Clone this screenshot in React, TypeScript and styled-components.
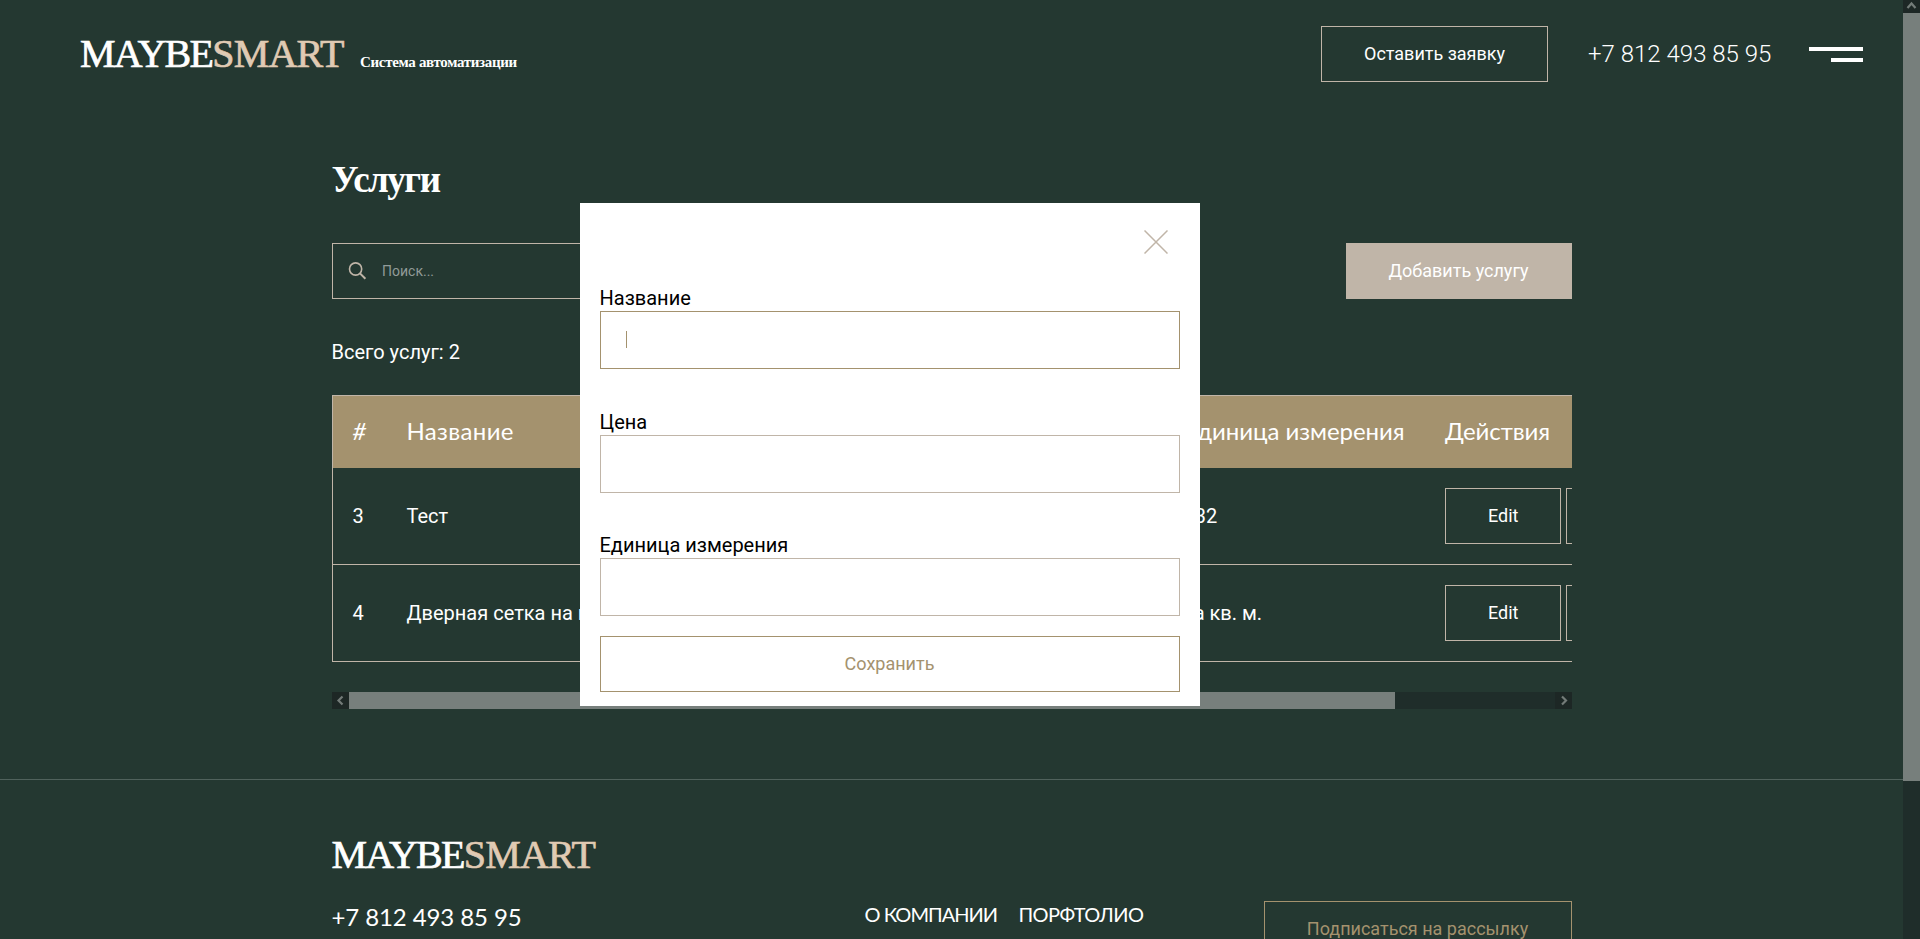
import React from "react";
import styled, { createGlobalStyle } from "styled-components";

const color = {
  bg: "#243831",
  gold: "#a4926e",
  beige: "#c0b5a8",
  sand: "#e0cab3",
  track: "#1f2d2a",
  arrowBox: "#1d2725",
  thumb: "#777f7c",
};

const GlobalStyle = createGlobalStyle`
  * { box-sizing: border-box; }
  body { margin: 0; background: ${color.bg}; color: #fff; font: 400 20px/24px Roboto, sans-serif; overflow: hidden; }
  button, input { font-family: inherit; border-radius: 0; outline: none; }
`;

const Screen = styled.div`
  position: relative;
  display: flex;
  height: 939px;
  overflow: hidden;
`;

const Page = styled.div`
  flex: 1;
  min-width: 0;
  display: flex;
  flex-direction: column;
`;

const Header = styled.header`
  height: 108px;
  flex: none;
  display: flex;
  align-items: center;
  padding: 0 40px 0 80px;
`;

const Logo = styled.div`
  display: flex;
  width: 264px;
  font: 400 40px/48px "Liberation Serif", serif;
  letter-spacing: -1.7px;
  -webkit-text-stroke: 0.7px currentColor;
`;

const LogoAccent = styled.span`
  color: ${color.sand};
  letter-spacing: -0.8px;
`;

const Tagline = styled.div`
  margin: 15px 0 0 16px;
  font: 700 15px/20px "Liberation Serif", serif;
  letter-spacing: -0.33px;
  white-space: nowrap;
`;

const Button = styled.button<{ $variant?: "outline" | "filled" | "gold"; $width?: number }>`
  height: 56px;
  flex: none;
  width: ${(p) => (p.$width ? `${p.$width}px` : "auto")};
  padding: 0 42px;
  font-size: 18px;
  line-height: 22px;
  white-space: nowrap;
  color: ${(p) => (p.$variant === "gold" ? color.gold : "#fff")};
  background: ${(p) => (p.$variant === "filled" ? color.beige : "transparent")};
  border: 1px solid ${(p) => (p.$variant === "gold" ? color.gold : color.beige)};
`;

const HeaderActions = styled.div`
  margin-left: auto;
  display: flex;
  align-items: center;
`;

const HeaderPhone = styled.a`
  width: 184px;
  margin: 0 37px 0 40px;
  font-size: 24px;
  font-weight: 300;
  line-height: 28px;
  white-space: nowrap;
`;

const Burger = styled.div`
  width: 54px;
  display: flex;
  flex-direction: column;
  align-items: flex-end;
  gap: 7px;
`;

const BurgerBar = styled.span<{ $width: number }>`
  width: ${(p) => p.$width}px;
  height: 4px;
  background: #fff;
`;

const Main = styled.main`
  width: 1240px;
  height: 671px;
  flex: none;
  margin-left: 331.5px;
  padding-top: 48px;
`;

const Title = styled.h1`
  margin: 0 0 39px;
  font: 700 37px/48px "Liberation Serif", serif;
  letter-spacing: -1.5px;
`;

const Toolbar = styled.div`
  display: flex;
  justify-content: space-between;
`;

const SearchBox = styled.label`
  width: 500px;
  height: 56px;
  display: flex;
  align-items: center;
  gap: 15.5px;
  padding-left: 15px;
  border: 1px solid ${color.beige};
`;

const SearchInput = styled.input`
  flex: 1;
  padding: 0;
  border: 0;
  background: transparent;
  font-size: 14px;
  &::placeholder { color: #919b98; opacity: 1; }
`;

const Total = styled.p`
  margin: 41px 0 31px;
`;

const TableScroll = styled.div`
  overflow: hidden;
`;

const Table = styled.div`
  width: 1430px;
  border: 1px solid ${color.beige};
  border-bottom: 0;
`;

const Row = styled.div`
  display: grid;
  grid-template-columns: 54px 654px 123px 261.5px 1fr;
  align-items: center;
  height: 97px;
  border-bottom: 1px solid ${color.beige};
`;

const HeadRow = styled(Row)`
  height: 72px;
  padding-bottom: 3px;
  border-bottom: 0;
  background: ${color.gold};
  font: 400 24px/29px Lato, sans-serif;
`;

const Cell = styled.div<{ $tracking?: number }>`
  display: flex;
  gap: 5px;
  padding: 0 20px;
  white-space: nowrap;
  letter-spacing: ${(p) => p.$tracking ?? 0}px;
`;

const Hash = styled.span`
  font-style: italic;
`;

const HScroll = styled.div`
  display: flex;
  height: 17px;
  margin-top: 30px;
  background: ${color.track};
`;

const ScrollArrow = styled.div<{ $height?: number }>`
  display: flex;
  align-items: center;
  justify-content: center;
  width: 17px;
  height: ${(p) => p.$height ?? 17}px;
  flex: none;
  background: ${color.arrowBox};
  &:last-child { margin-left: auto; }
`;

const HThumb = styled.div`
  width: 1046px;
  background: ${color.thumb};
`;

const VScroll = styled.div`
  width: 17px;
  flex: none;
  background: ${color.track};
`;

const VThumb = styled.div`
  height: 768px;
  background: ${color.thumb};
`;

const Footer = styled.footer`
  flex: 1;
  display: flex;
  align-items: flex-start;
  padding: 51px 331.5px 0;
  border-top: 1px solid #50625c;
`;

const FooterBrand = styled.div`
  width: 533px;
`;

const FooterPhone = styled.a`
  display: block;
  margin-top: 23px;
  font: 400 24px/29px Lato, sans-serif;
  letter-spacing: -0.1px;
`;

const FooterNav = styled.nav`
  display: flex;
  gap: 21.5px;
  padding-top: 71px;
  line-height: 24px;
`;

const NavLink = styled.a<{ $tracking: number }>`
  white-space: nowrap;
  font-family: Lato, sans-serif;
  letter-spacing: ${(p) => p.$tracking}px;
`;

const Subscribe = styled.div`
  margin: 70px 0 0 auto;
`;

const Modal = styled.form`
  position: absolute;
  left: 579.5px;
  top: 203px;
  width: 620px;
  height: 503px;
  display: flex;
  flex-direction: column;
  padding: 27px 20px 0;
  background: #fff;
  color: #000;
`;

const CloseButton = styled.button`
  align-self: flex-end;
  display: flex;
  margin: 0 12px 32px 0;
  padding: 0;
  border: 0;
  background: none;
`;

const Field = styled.label`
  display: flex;
  flex-direction: column;
  gap: 1px;
  margin-bottom: 40.5px;
  &:nth-of-type(3) { margin-bottom: 20px; }
`;

const FieldBox = styled.div<{ $focused?: boolean }>`
  display: flex;
  align-items: center;
  height: 58px;
  padding: 0 25px;
  border: 1px solid ${(p) => (p.$focused ? color.gold : color.beige)};
`;

const Caret = styled.span`
  width: 1px;
  height: 17px;
  margin-bottom: 1px;
  background: ${color.gold};
`;

const Arrow = ({ d }: { d: string }) => (
  <svg width="11" height="11" viewBox="0 0 11 11" fill="none" stroke="#737b78" strokeWidth="2.2">
    <path d={d} />
  </svg>
);

const Brand = () => (
  <Logo>
    MAYBE<LogoAccent>SMART</LogoAccent>
  </Logo>
);

const services = [
  { id: 3, name: "Тест", price: "132", unit: "132" },
  { id: 4, name: "Дверная сетка на петлях", price: "1200", unit: "за кв. м." },
];

const fields = ["Название", "Цена", "Единица измерения"];

export default function App() {
  return (
    <Screen>
      <GlobalStyle />
      <Page>
        <Header>
          <Brand />
          <Tagline>Система автоматизации</Tagline>
          <HeaderActions>
            <Button $width={227}>Оставить заявку</Button>
            <HeaderPhone>+7 812 493 85 95</HeaderPhone>
            <Burger>
              <BurgerBar $width={54} />
              <BurgerBar $width={32} />
            </Burger>
          </HeaderActions>
        </Header>
        <Main>
          <Title>Услуги</Title>
          <Toolbar>
            <SearchBox>
              <svg width="19" height="18" viewBox="0 0 19 18" fill="none" stroke={color.beige} strokeWidth="1.6">
                <circle cx="7.6" cy="7" r="6.1" />
                <path d="M12 11.4 17.4 16.8" strokeWidth="2" />
              </svg>
              <SearchInput placeholder="Поиск..." />
            </SearchBox>
            <Button $variant="filled" $width={226}>Добавить услугу</Button>
          </Toolbar>
          <Total>Всего услуг: 2</Total>
          <TableScroll>
            <Table>
              <HeadRow>
                <Cell><Hash>#</Hash></Cell>
                <Cell $tracking={0.35}>Название</Cell>
                <Cell>Цена</Cell>
                <Cell $tracking={-0.05}>Единица измерения</Cell>
                <Cell $tracking={-0.1}>Действия</Cell>
              </HeadRow>
              {services.map((s) => (
                <Row key={s.id}>
                  <Cell>{s.id}</Cell>
                  <Cell>{s.name}</Cell>
                  <Cell>{s.price}</Cell>
                  <Cell>{s.unit}</Cell>
                  <Cell>
                    <Button $width={116}>Edit</Button>
                    <Button>Delete</Button>
                  </Cell>
                </Row>
              ))}
            </Table>
          </TableScroll>
          <HScroll>
            <ScrollArrow><Arrow d="M7.5 1.5 3.5 5.5 7.5 9.5" /></ScrollArrow>
            <HThumb />
            <ScrollArrow><Arrow d="M4 1.5 8 5.5 4 9.5" /></ScrollArrow>
          </HScroll>
        </Main>
        <Footer>
          <FooterBrand>
            <Brand />
            <FooterPhone>+7 812 493 85 95</FooterPhone>
          </FooterBrand>
          <FooterNav>
            <NavLink $tracking={-1}>О КОМПАНИИ</NavLink>
            <NavLink $tracking={-0.6}>ПОРФТОЛИО</NavLink>
          </FooterNav>
          <Subscribe>
            <Button $variant="gold" $width={308}>Подписаться на рассылку</Button>
          </Subscribe>
        </Footer>
      </Page>
      <VScroll>
        <ScrollArrow $height={13}><Arrow d="M1.5 7 5.5 2.5 9.5 7" /></ScrollArrow>
        <VThumb />
      </VScroll>
      <Modal>
        <CloseButton type="button" aria-label="Закрыть">
          <svg width="24" height="24" viewBox="0 0 24 24" stroke={color.beige} strokeWidth="1.5">
            <path d="M0.5 0.5 23.5 23.5M23.5 0.5 0.5 23.5" />
          </svg>
        </CloseButton>
        {fields.map((f, i) => (
          <Field key={f}>
            {f}
            <FieldBox $focused={i === 0}>{i === 0 && <Caret />}</FieldBox>
          </Field>
        ))}
        <Button type="button" $variant="gold">Сохранить</Button>
      </Modal>
    </Screen>
  );
}
